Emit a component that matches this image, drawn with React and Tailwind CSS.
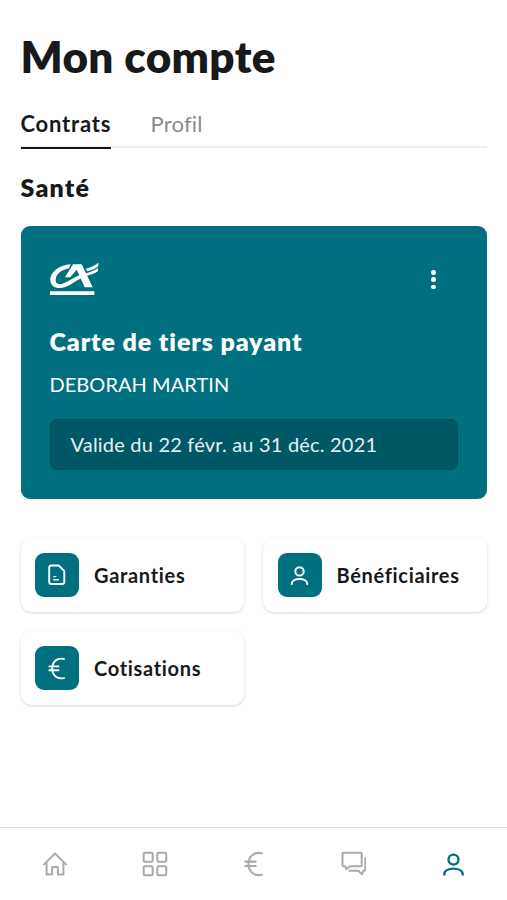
function DocumentIcon() {
  return (
    <svg width="20" height="24" viewBox="0 0 20 24" fill="none" stroke="currentColor" strokeWidth="1.9" strokeLinejoin="round" strokeLinecap="round">
      <path d="M4.5 2.5h7.2l5.6 5.6v10.6a2.3 2.3 0 0 1-2.3 2.3H4.500a2.300 2.300 0 0 1-2.300-2.300V4.800a2.300 2.300 0 0 1 2.300-2.300Z" />
      <path d="M6.800 13.600h2M6.800 16.800h4.800" strokeWidth="1.4" />
    </svg>
  );
}

function UserIcon({ className }) {
  return (
    <svg className={className} viewBox="0 0 24 24" fill="none" stroke="currentColor" strokeWidth="2.3" strokeLinecap="round">
      <circle cx="12" cy="7.300" r="4.800" />
      <path d="M3.100 21.700c0-3.700 4-5.700 8.900-5.700s8.900 2 8.900 5.700" />
    </svg>
  );
}

function EuroIcon({ className }) {
  return (
    <svg className={className} viewBox="0 0 20 26" fill="none" stroke="currentColor" strokeWidth="2.1" strokeLinecap="round">
      <path d="M17.800 2.200c-7.400-1.700-13.300 3-13.300 10.800s5.900 12.500 13.300 10.800M1.300 10.600h10.400M1.300 15h10.400" />
    </svg>
  );
}

function HomeIcon() {
  return (
    <svg width="26" height="26" viewBox="0 0 26 26" fill="none" stroke="currentColor" strokeWidth="2" strokeLinecap="round" strokeLinejoin="round">
      <path d="m3 13.400 11-10.900 11 10.900M5.600 12.500v11h5.500v-7.500h5.800v7.500h5.500v-11" />
    </svg>
  );
}

function GridIcon() {
  return (
    <svg width="26" height="26" viewBox="0 0 26 26" fill="none" stroke="currentColor" strokeWidth="2">
      <rect x="1.700" y="1.700" width="9" height="9" rx="1.300" />
      <rect x="15.300" y="1.700" width="9" height="9" rx="1.300" />
      <rect x="1.700" y="15.300" width="9" height="9" rx="1.300" />
      <rect x="15.300" y="15.300" width="9" height="9" rx="1.300" />
    </svg>
  );
}

function ChatIcon() {
  return (
    <svg width="26" height="26" viewBox="0 0 26 26" fill="none" stroke="currentColor" strokeWidth="2" strokeLinecap="round" strokeLinejoin="round">
      <path d="M3.500 1.800h17.200c.6 0 1 .4 1 1v11.400c0 .6-.4 1-1 1H10l-3.600 3-1.200-3H3.500c-.6 0-1-.4-1-1V2.800c0-.6.4-1 1-1Z" />
      <path d="M25.300 7.200v11.500c0 .6-.4 1-1 1h-1l-1.300 3.600-3.700-3.600H9.500" />
    </svg>
  );
}

function BankLogo() {
  return (
    <svg width="50" height="36" viewBox="12 12 150 108" fill="currentColor">
      {/* C and its long stroke running through the A */}
      <path d="M74 25C42 26 13 48 13 71c0 28 34 32 62 14 18-12 33-21 46-25 14-4 25-7 35-14V36c-13 9-26 13-41 17-20 5-31 12-47 21-20 12-39 16-39-2 0-16 17-31 40-35Z" />
      <path d="M81 25h26l33 69h-24L92 41 73 64H57Z" />
      <path d="M119 38c14-4 27-9 38-18v11c-10 8-21 12-33 15Z" />
      <path d="M12 106h133v11H12Z" />
    </svg>
  );
}

function Shortcut({ icon, children }) {
  return (
    <button className="flex h-[74px] items-center gap-[15px] rounded-[11px] bg-white pl-[14.500px] text-left tracking-[0.680px] shadow-[0_1px_3px_rgba(0,0,0,0.16)]">
      <span className="flex size-[44px] shrink-0 items-center justify-center rounded-[9px] bg-[#007080] text-white">
        {icon}
      </span>
      {children}
    </button>
  );
}

export default function App() {
  return (
    <div className="flex h-[900px] w-full flex-col overflow-hidden bg-white font-['Lato',sans-serif] text-[#17191a]">
      <main className="flex-1 px-[20.500px]">
        <h1 className="mt-[26px] h-[60px] text-[44px] leading-[60px] font-extrabold tracking-[0.350px] whitespace-nowrap">Mon compte</h1>

        <nav className="mt-[20px] flex h-[42px] gap-[40px] border-b-2 border-[#eeeeee] text-[22px] leading-[35px]">
          <a className="h-[42.500px] w-[90px] border-b-[2px] border-[#151718] font-bold tracking-[0.8px] whitespace-nowrap">Contrats</a>
          <a className="tracking-[0.2px] text-[#8b8b8b]">Profil</a>
        </nav>

        <h2 className="mt-[23px] h-[32px] text-[25px] leading-[32px] font-extrabold tracking-[1.200px]">Santé</h2>

        <section className="mt-[23px] h-[273px] rounded-[9px] bg-[#007080] px-[29px] pt-[34px] text-white">
          <div className="flex justify-between">
            <BankLogo />
            <button className="mt-[10px] mr-[22px] flex h-[19px] flex-col items-center justify-between" aria-label="Options">
              <span className="size-[4.500px] rounded-full bg-white" />
              <span className="size-[4.500px] rounded-full bg-white" />
              <span className="size-[4.500px] rounded-full bg-white" />
            </button>
          </div>
          <h3 className="mt-[29px] h-[32px] text-[25px] leading-[32px] font-extrabold tracking-[0.900px] whitespace-nowrap">Carte de tiers payant</h3>
          <p className="mt-[13px] h-[28px] text-[20px] leading-[28px] tracking-[0.050px] whitespace-nowrap">DEBORAH MARTIN</p>
          <div className="mt-[21px] h-[51px] rounded-[7px] border border-[#004c57] bg-[#005866] pl-[20px] text-[20px] leading-[49px] tracking-[0.200px] whitespace-nowrap text-[#e5f0f1]">
            Valide du 22 févr. au 31 déc. 2021
          </div>
        </section>

        <div className="mt-[39px] grid grid-cols-2 gap-x-[19px] gap-y-[19px] text-[20px] font-bold">
          <Shortcut icon={<DocumentIcon />}>Garanties</Shortcut>
          <Shortcut icon={<UserIcon className="size-[21px]" />}>Bénéficiaires</Shortcut>
          <Shortcut icon={<EuroIcon className="h-[23px] w-[18px]" />}>Cotisations</Shortcut>
        </div>
      </main>

      <footer className="flex h-[73px] items-center justify-between border-t border-[#dfdfdf] px-[41px] text-[#aaaaaa]">
        <HomeIcon />
        <GridIcon />
        <EuroIcon className="h-[26px] w-[22px]" />
        <ChatIcon />
        <UserIcon className="size-[25px] text-[#007080]" />
      </footer>
    </div>
  );
}
